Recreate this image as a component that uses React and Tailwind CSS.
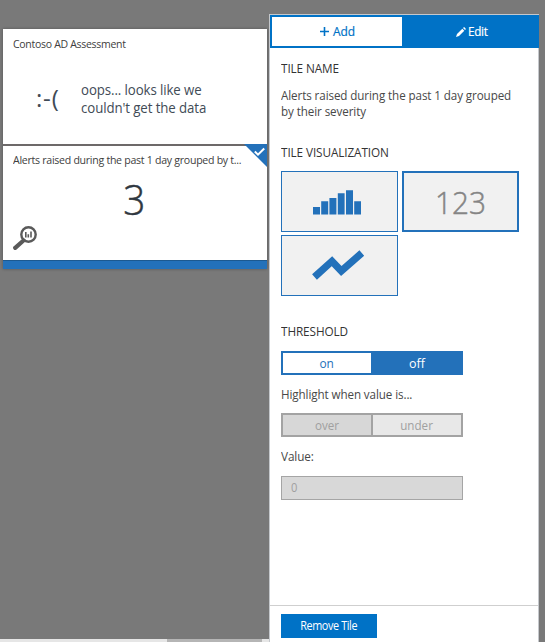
import React from "react";

function AlertsIcon() {
  return (
    <svg className="block h-[26px] w-[26px]" viewBox="0 0 26 26" fill="none">
      <path d="M10.5 15.5L2.2 22.8" stroke="#5a5a5a" strokeWidth="4.2" strokeLinecap="round" />
      <circle cx="15.5" cy="9.5" r="7.2" stroke="#5a5a5a" strokeWidth="2.4" />
      <path d="M12.8 7v5.5M15.3 9.2v3.3M18 6.5v6" stroke="#5a5a5a" strokeWidth="1.6" />
    </svg>
  );
}

function SelectedCorner() {
  return (
    <svg className="absolute -top-0.5 right-0 h-[23px] w-[23px]" viewBox="0 0 23 23" fill="none">
      <path d="M0 0h23v23z" fill="#2371ba" />
      <path d="M10.8 7.5l3.2 3.2 6.2-6.2" stroke="#fff" strokeWidth="2" />
    </svg>
  );
}

function Heading({ children, className }) {
  return (
    <h2
      className={`h-[18px] origin-left scale-x-[0.94] text-[12.5px] leading-[18px] tracking-[-0.1px] whitespace-nowrap text-[#333] ${className}`}
    >
      {children}
    </h2>
  );
}

function Tiles() {
  return (
    <div className="flex w-[269px] flex-col">
      <div className="mt-[29px] ml-[3px] w-[264px] shadow-[0_0_3px_rgba(0,0,0,0.3)]">
        <section className="h-[115px] bg-white pt-[7px] pl-[10px]">
          <h3 className="origin-left scale-x-[0.913] text-[11.5px] leading-[16px] tracking-[-0.32px] text-[#404040]">
            Contoso AD Assessment
          </h3>
          <div className="mt-[29px] flex text-[#414b56]">
            <div className="ml-[23px] w-[45px] text-[24px] leading-[34px] tracking-[0.8px]">:-(</div>
            <p className="origin-left scale-x-[0.947] text-[14px] leading-[18px] tracking-[-0.1px] whitespace-nowrap">
              oops... looks like we
              <br />
              couldn't get the data
            </p>
          </div>
        </section>
        <div className="h-[2px] bg-[#6d6969]" />
        <section className="relative flex h-[114px] flex-col bg-white pl-[10px]">
          <h3 className="mt-[6px] origin-left scale-x-[0.92] text-[11.5px] leading-[16px] tracking-[-0.3px] whitespace-nowrap text-[#404040]">
            Alerts raised during the past 1 day grouped by t...
          </h3>
          <div className="mt-[4px] pr-[11px] text-center text-[43px] leading-[54px] font-light text-[#2f3740]">
            <span className="inline-block scale-x-[0.9] [-webkit-text-stroke:0.5px]">3</span>
          </div>
          <div className="-mt-px">
            <AlertsIcon />
          </div>
          <SelectedCorner />
        </section>
        <div className="h-[9px] border-t border-[#1c5990] bg-[#2371ba]" />
      </div>
      <div className="mt-auto flex h-[3px] bg-[#e6e6e6]">
        <div className="ml-[167px] w-[95px] bg-[#b5b5b5]" />
      </div>
    </div>
  );
}

function Panel() {
  return (
    <aside className="mt-[14px] flex w-[270px] flex-col border-x border-t border-[#c5c8cc] bg-white text-[#484848]">
      <div className="-mr-px flex h-[33px] bg-[#0072c6] p-[2px] text-[13px] leading-[29px]">
        <div className="flex w-[130px] items-center bg-white pl-[48px] text-[#0072c6]">
          <svg className="mr-[4px] h-[9px] w-[9px]" viewBox="0 0 9 9" stroke="currentColor" strokeWidth="1.6">
            <path d="M4.5 0v9M0 4.5h9" />
          </svg>
          <span className="origin-left scale-x-[0.92] tracking-[-0.1px] [-webkit-text-stroke:0.2px]">Add</span>
        </div>
        <div className="flex items-center pl-[54px] text-white">
          <svg className="mr-[2px] h-[10px] w-[10px]" viewBox="0 0 10 10" fill="currentColor">
            <path d="M0 10l1-3L6.3 1.8l2 2L3 9zM7 1.1L8.1 0l2 2L9 3.1z" />
          </svg>
          <span className="origin-left scale-x-[0.9] tracking-[-0.3px] [-webkit-text-stroke:0.2px]">Edit</span>
        </div>
      </div>
      <div className="pl-[11px] text-[12.5px]">
        <Heading className="mt-[12px]">TILE NAME</Heading>
        <p className="mt-[10px] origin-left scale-x-[0.93] leading-[16px] tracking-[-0.1px] whitespace-nowrap">
          Alerts raised during the past 1 day grouped
          <br />
          by their severity
        </p>
        <Heading className="mt-[24px]">TILE VISUALIZATION</Heading>
        <div className="mt-[9px] grid grid-cols-[117px_117px] gap-x-[4px] gap-y-[3px]">
          <div className="h-[61px] border border-[#2371ba] bg-[#f1f1f1]">
            <svg className="h-full w-full" viewBox="0 0 115 59" fill="#2371ba">
              <path d="M31 35h7v7.5h-7zM39.2 29.2h7v13.3h-7zM47.4 26h7v16.5h-7zM55.8 21.2h6.8v21.3h-6.8zM64 18.2h7v24.3h-7zM72.2 29.2h6.8v13.3h-6.8z" />
            </svg>
          </div>
          <div className="h-[61px] border-2 border-[#2371ba] bg-[#f1f1f1] text-center text-[32px] leading-[58px] font-light text-[#858585]">
            <span className="inline-block scale-x-[0.93] [-webkit-text-stroke:0.5px]">123</span>
          </div>
          <div className="h-[61px] border border-[#2371ba] bg-[#f1f1f1]">
            <svg className="h-full w-full" viewBox="0 0 115 59" fill="none">
              <path d="M32.5 41L50 25.2l9.3 9.8L79.8 17" stroke="#2371ba" strokeWidth="7.2" />
            </svg>
          </div>
        </div>
        <Heading className="mt-[27px]">THRESHOLD</Heading>
        <div className="mt-[10px] flex h-[24px] w-[182px] border-2 border-[#2371ba] bg-[#2371ba] text-center leading-[22px]">
          <div className="w-[88px] bg-white text-[#2371ba]">
            <span className="inline-block scale-x-[0.95]">on</span>
          </div>
          <div className="flex-1 pl-[2px] text-white">off</div>
        </div>
        <p className="mt-[11px] origin-left scale-x-[0.93] leading-[18px] tracking-[-0.1px]">
          Highlight when value is...
        </p>
        <div className="mt-[9px] flex h-[24px] w-[182px] border-2 border-[#a3a3a3] text-center leading-[22px] text-[#a0a0a0]">
          <div className="w-[88px] bg-[#d7d7d7]">
            <span className="inline-block scale-x-[0.93]">over</span>
          </div>
          <div className="flex-1 border-l-2 border-[#a3a3a3] bg-[#e8e8e8]">
            <span className="inline-block scale-x-[0.93]">under</span>
          </div>
        </div>
        <p className="mt-[11px] origin-left scale-x-[0.94] leading-[18px] tracking-[-0.1px]">Value:</p>
        <div className="mt-[10px] h-[24px] w-[182px] border border-[#a5a5a5] bg-[#d8d8d8] pl-[9px] text-[12px] leading-[22px] text-[#a0a0a0]">
          <span className="inline-block origin-left scale-x-[0.93]">0</span>
        </div>
      </div>
      <footer className="mt-auto h-[37px] border-t border-[#cfcfcf] pt-[8px] pl-[11px]">
        <button className="block h-[24px] w-[96px] bg-[#0072c6] text-[12px] leading-[24px] tracking-[-0.4px] text-white">
          <span className="inline-block scale-x-[0.9]">Remove Tile</span>
        </button>
      </footer>
    </aside>
  );
}

export default function App() {
  return (
    <div className="flex h-[642px] w-[545px] overflow-hidden bg-[#797979] font-['Open_Sans','Noto_Sans',sans-serif]">
      <Tiles />
      <Panel />
    </div>
  );
}
